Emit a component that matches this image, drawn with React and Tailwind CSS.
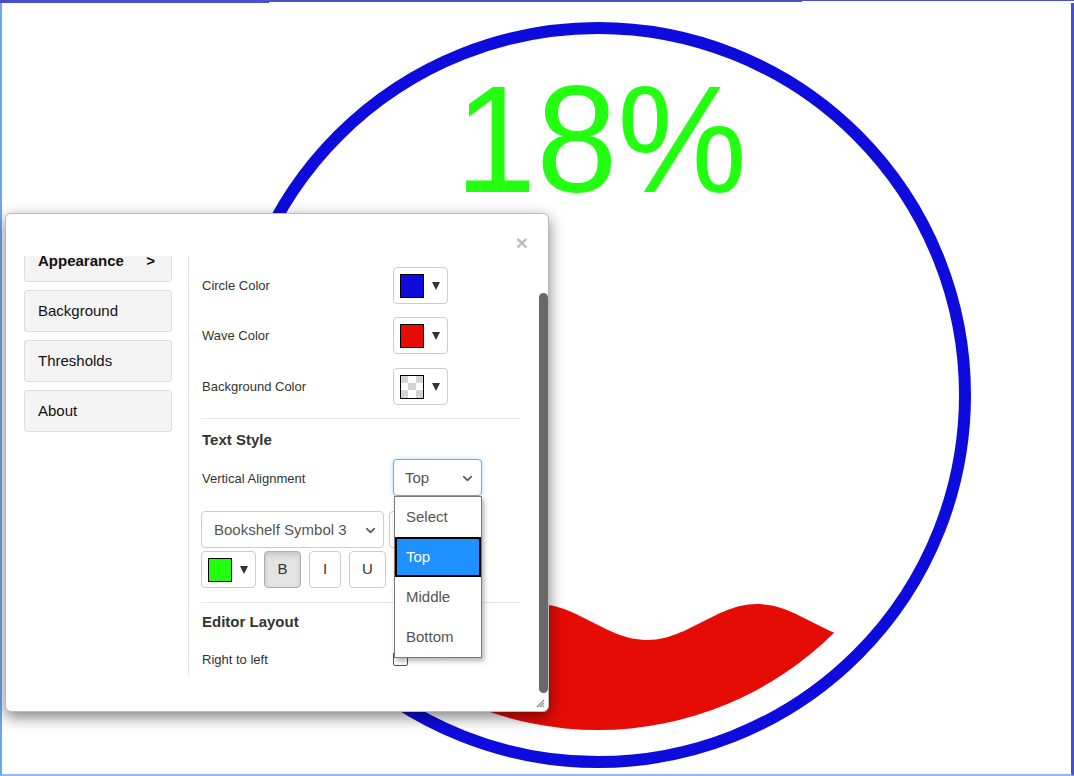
import { ChevronDown } from "lucide-react";

const wavePts = [];
for (let x = 240; x <= 960; x += 4) {
  const y = 622 - 18 * Math.cos((2 * Math.PI * (x - 757)) / 220);
  wavePts.push(`${x},${y.toFixed(1)}`);
}
const wavePath = `M240,800 L${wavePts.join(" L")} L960,800 Z`;

function Gauge() {
  return (
    <svg className="block" width="1068" height="771" viewBox="2 3 1068 771">
      <defs>
        <clipPath id="inner">
          <circle cx="598" cy="395" r="335" />
        </clipPath>
      </defs>
      <circle cx="598" cy="395" r="367" fill="none" stroke="#0e0bdd" strokeWidth="12" />
      <path d={wavePath} fill="#e60c06" clipPath="url(#inner)" />
      <text
        x="601"
        y="192"
        textAnchor="middle"
        fontSize="152"
        textLength="292"
        lengthAdjust="spacingAndGlyphs"
        fill="#22ff11"
        fontFamily="'Liberation Sans', Arial, sans-serif"
      >
        18%
      </text>
    </svg>
  );
}

function Triangle() {
  return <div className="ml-[8px] h-0 w-0 border-x-[4px] border-t-[8px] border-x-transparent border-t-[#333]" />;
}

function ColorButton({ swatch, checker }) {
  return (
    <div className="flex h-[37px] w-[55px] shrink-0 items-center rounded-[4px] border border-[#ccc] bg-white pl-[6px]">
      {checker ? (
        <div className="grid h-[24px] w-[24px] grid-cols-3 grid-rows-3 border border-black">
          {[1, 0, 1, 0, 1, 0, 1, 0, 1].map((g, i) => (
            <div key={i} className={g ? "bg-[#d4d4d4]" : "bg-white"} />
          ))}
        </div>
      ) : (
        <div className={`h-[24px] w-[24px] border border-black ${swatch}`} />
      )}
      <Triangle />
    </div>
  );
}

function NavButton({ children, active }) {
  return (
    <div
      className={`flex h-[42px] w-[148px] shrink-0 items-center justify-between rounded-[3px] border border-[#ddd] bg-[#f4f4f4] pl-[13px] pr-[16px] text-[15px] text-[#111] ${
        active ? "font-bold" : ""
      }`}
    >
      <span>{children}</span>
      {active && <span>&gt;</span>}
    </div>
  );
}

function ColorRow({ label, swatch, checker, className }) {
  return (
    <div className={`flex items-center ${className || ""}`}>
      <div className="w-[191px] text-[13px] text-[#333]">{label}</div>
      <ColorButton swatch={swatch} checker={checker} />
    </div>
  );
}

function StyleButton({ children, pressed, width }) {
  return (
    <div
      className={`flex h-[37px] items-center justify-center rounded-[4px] border text-[15px] text-[#333] ${width} ${
        pressed
          ? "border-[#adadad] bg-[#e3e3e3] shadow-[inset_0_3px_5px_rgba(0,0,0,0.125)]"
          : "border-[#ccc] bg-white"
      }`}
    >
      {children}
    </div>
  );
}

function Dialog() {
  return (
    <div className="absolute left-[5px] top-[213px] flex h-[499px] w-[544px] rounded-[6px] border border-[#bbb] bg-white shadow-[0_5px_15px_rgba(0,0,0,0.5)]">
      <div className="flex flex-1 flex-col">
        <div className="flex h-[42px] shrink-0 justify-end pr-[11px] pt-[18px]">
          <span className="text-[21px] font-bold leading-none text-[#bbb]">×</span>
        </div>
        <div className="flex h-[420px] shrink-0 overflow-hidden">
          <div className="flex w-[182px] shrink-0 flex-col gap-[8px] pl-[18px]">
            <div className="-mt-[16px] flex flex-col gap-[8px]">
              <NavButton active>Appearance</NavButton>
              <NavButton>Background</NavButton>
              <NavButton>Thresholds</NavButton>
              <NavButton>About</NavButton>
            </div>
          </div>
          <div className="flex flex-1 flex-col border-l border-[#e5e5e5] pl-[13px] pr-[19px] pt-[11px]">
            <ColorRow label="Circle Color" swatch="bg-[#0e0bdd]" />
            <ColorRow label="Wave Color" swatch="bg-[#e60c06]" className="mt-[13px]" />
            <ColorRow label="Background Color" checker className="mt-[14px]" />
            <div className="-ml-[1px] mt-[13px] border-t border-[#e5e5e5]" />
            <div className="mt-[11px] h-[20px] text-[15px] font-bold leading-[20px] text-[#333]">Text Style</div>
            <div className="mt-[9px] flex items-center">
              <div className="w-[191px] pt-[2px] text-[13px] text-[#333]">Vertical Alignment</div>
              <div className="relative h-[37px] w-[89px]">
                <div className="flex h-[37px] w-[89px] items-center justify-between rounded-[4px] border border-[#66afe9] bg-white pl-[11px] pr-[6px] pt-[2px] text-[15px] text-[#555] shadow-[0_0_4px_rgba(102,175,233,0.5)]">
                  <span>Top</span>
                  <ChevronDown size={15} strokeWidth={2.5} color="#555" />
                </div>
                <div className="absolute left-[1px] top-[37px] z-10 flex w-[88px] flex-col border border-[#7a7a7a] bg-white text-[15px] text-[#555] shadow-[2px_3px_5px_rgba(0,0,0,0.3)]">
                  <div className="flex h-[40px] items-center pl-[11px] pt-[1px]">Select</div>
                  <div className="flex h-[40px] items-center border-2 border-black bg-[#1e90ff] pl-[9px] pt-[1px] text-white">Top</div>
                  <div className="flex h-[40px] items-center pl-[11px] pt-[1px]">Middle</div>
                  <div className="flex h-[40px] items-center pl-[11px] pt-[1px]">Bottom</div>
                </div>
              </div>
            </div>
            <div className="-ml-[1px] mt-[15px] flex gap-[5px]">
              <div className="flex h-[37px] w-[183px] items-center justify-between rounded-[4px] border border-[#ccc] bg-white pl-[12px] pr-[5px] pt-[1px] text-[15px] text-[#555]">
                <span>Bookshelf Symbol 3</span>
                <ChevronDown size={15} strokeWidth={2.5} color="#555" />
              </div>
              <div className="h-[37px] w-[70px] rounded-[4px] border border-[#ccc] bg-white" />
            </div>
            <div className="-ml-[1px] mt-[3px] flex gap-[8px]">
              <ColorButton swatch="bg-[#22ff11]" />
              <StyleButton pressed width="w-[37px]">B</StyleButton>
              <StyleButton width="w-[32px]">I</StyleButton>
              <StyleButton width="w-[37px]">U</StyleButton>
            </div>
            <div className="-ml-[1px] mt-[14px] border-t border-[#e5e5e5]" />
            <div className="mt-[9px] h-[20px] text-[15px] font-bold leading-[20px] text-[#333]">Editor Layout</div>
            <div className="mt-[17px] flex h-[20px] items-center">
              <div className="w-[191px] pt-[1px] text-[13px] text-[#333]">Right to left</div>
              <div className="h-[14px] w-[15px] rounded-[2px] border border-[#555] bg-white" />
            </div>
          </div>
        </div>
      </div>
      <div className="w-[9px] shrink-0 pt-[79px]">
        <div className="h-[400px] rounded-full bg-[#686868]" />
      </div>
      <svg className="absolute bottom-[3px] right-[3px]" width="10" height="10" viewBox="0 0 10 10">
        <path d="M9 2 L2 9 M9 5 L5 9 M9 8 L8 9" stroke="#888" strokeWidth="1.2" />
      </svg>
    </div>
  );
}

export default function App() {
  return (
    <div className="relative flex h-[776px] w-[1074px] flex-col overflow-hidden bg-white font-['Liberation_Sans',Arial,sans-serif]">
      <div className="flex h-[3px] shrink-0 items-start">
        <div className="h-[3px] w-[269px] bg-[#4a4fd0]" />
        <div className="h-[2px] w-[533px] bg-[#4a4fd0]" />
        <div className="h-[1px] flex-1 bg-[#4a4fd0]" />
      </div>
      <div className="flex-1 overflow-hidden border-b-2 border-l-2 border-r-[3px] border-b-[#8fb8f5] border-l-[#6aa6f2] border-r-[#4a4fd0]">
        <Gauge />
      </div>
      <Dialog />
    </div>
  );
}
